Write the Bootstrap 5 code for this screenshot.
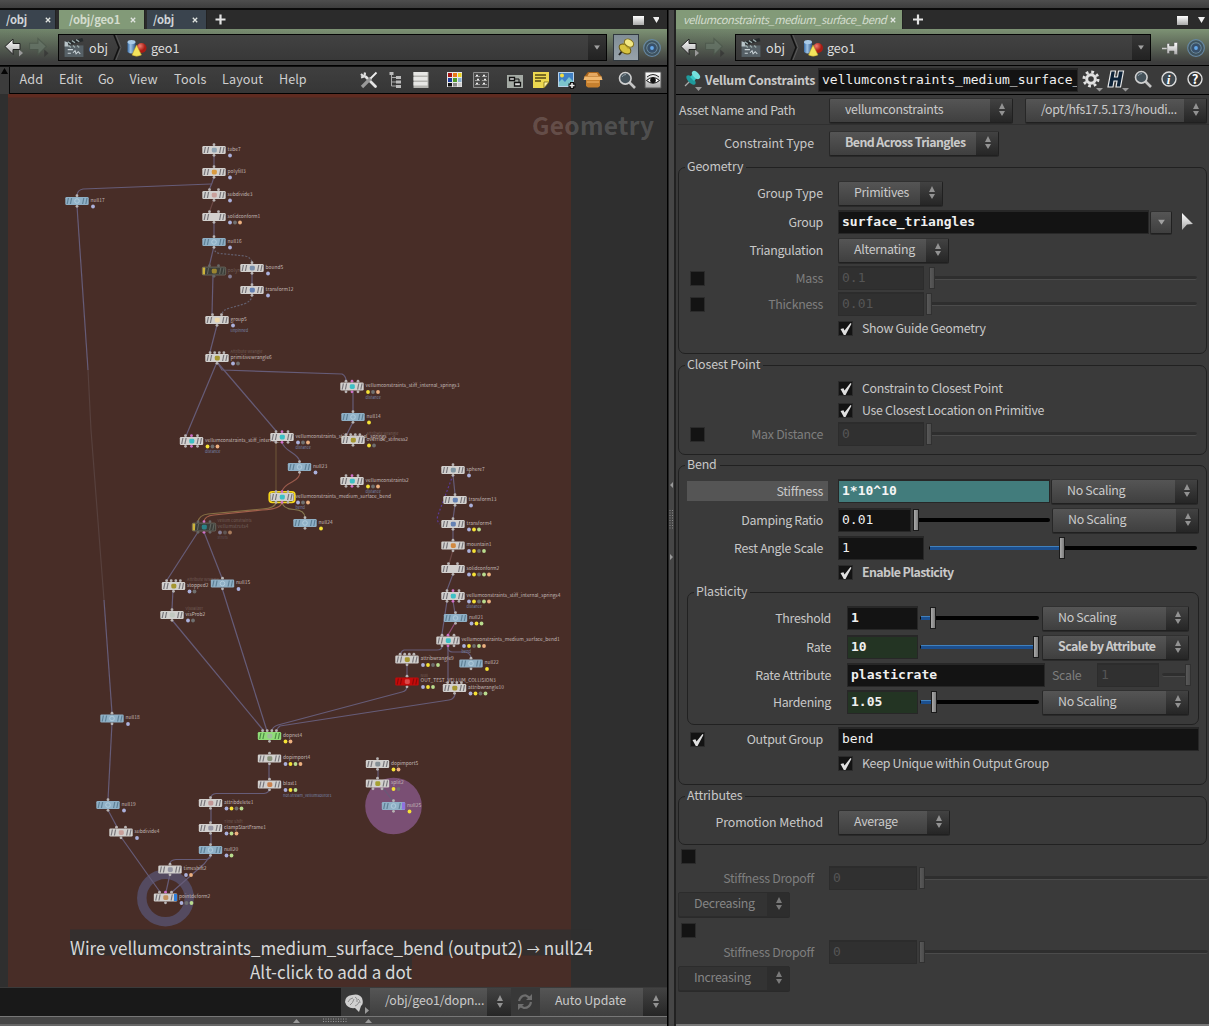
<!DOCTYPE html>
<html lang="en">
<head>
<meta charset="utf-8">
<meta name="viewport" content="width=device-width, initial-scale=1">
<title>Houdini - Vellum Constraints</title>
<link href="https://cdn.jsdelivr.net/npm/bootstrap@5.3.0/dist/css/bootstrap.min.css" rel="stylesheet">
<style>
:root{--ui:"Noto Sans CJK SC","Open Sans",sans-serif;--code:"DejaVu Sans Mono","Liberation Mono",monospace}
body{width:1209px;height:1026px;overflow:hidden;background:#3a3a3a;color:#c8c8c8;font-family:var(--ui);font-size:12.4px;line-height:18px}
svg{display:block;flex:none}
.topstrip{height:10px;background:linear-gradient(#4e4e4e,#3d3d3d);border-bottom:2px solid #0b0b0b;flex:none}
.leftpane{width:668px;border-right:1px solid #000;flex:none}
.vsplit{width:8px;background:#464646;border-left:1px solid #222;border-right:2px solid #222;flex:none}
.rightpane{width:533px;background:#3a3a3a;flex:none}
.tabstrip{height:19px;background:#2b2b2b;flex:none}
.ptab{height:19px;padding:0 4px 0 6px;background:#3a444e;color:#d0d4d8;font-weight:700;font-size:11.3px;letter-spacing:-.2px;border-right:1px solid #222}
.ptab svg{margin-top:7px}
.ptab.live{background:#829a78;color:#d3dccd}
.t1{width:56px}.t2{width:86px;margin-left:3px}.t3{width:60px;margin-left:2px}
.t4{width:227px;font-style:italic;font-weight:400;font-size:11.2px;letter-spacing:-.46px;padding:0 6px 0 7px}
.pathbar{height:37px;background:linear-gradient(#80947700,#3d3d3d 92%),linear-gradient(90deg,#70846a,#7d9274 50%);border-bottom:1px solid #000;flex:none}
.pathfield{height:27px;margin-top:5px;border:1px solid #050505;background:linear-gradient(#424242,#383838);color:#dcdcdc;font-size:12.6px;flex:none}
.pf1{width:549px;margin-left:8px}.pf2{width:416px;margin-left:9px}
.pathdrop{width:18px;height:25px;background:linear-gradient(#363636,#222)}
.pinbtn{width:26px;height:27px;margin:5px 0 0 6px;background:linear-gradient(#808d96,#98a3aa);border:1px solid #30383e;flex:none}
.menurow{height:28px;background:linear-gradient(#3f3f3f,#363636);border-bottom:1px solid #000;border-top:1px solid #111;flex:none}
.menuend{width:10px;height:27px;border-right:1px solid #0a0a0a;background:#3c3c3c}
.netview{height:893px;background:#2f2f2f;flex:none}
.netview text{font-family:var(--ui)}
.cookbar{height:28px;background:#191919;flex:none;letter-spacing:-.1px}
.bottomsplit{height:10px;background:#464646;border-top:1px solid #777;border-bottom:2px solid #666}
.cb1{width:29px;height:28px;background:#383838}
.sel{height:25px;border:1px solid #202020;border-top-color:#303030;border-left-color:#272727;border-radius:2px;background:linear-gradient(#555,#3f3f3f);color:#cacaca;flex:none;box-shadow:0 1px 0 #2a2a2a}
.sel span{padding-left:15px;flex:1;white-space:nowrap;line-height:21px}
.sel em{width:22px;height:23px;background:linear-gradient(#424242,#262626);display:flex;align-items:center;justify-content:center;padding-left:1px}
.sel.off{background:#333;color:#858585;border-color:#2c2c2c}
.sel.off em{background:#2b2b2b;opacity:.75}
.cookbar .sel{border:0;height:28px;border-radius:0}.cookbar .sel span{line-height:25px}.cookbar .sel em{height:28px;width:24px}
.ck1{width:141px}.ck2{width:127px}
.head{height:29px;border-bottom:1px solid #000;flex:none}
.fld{height:24px;background:#131313;border:1px solid #272727;border-top-width:2px;color:#f0f0f0;font-family:var(--code);font-size:13px;letter-spacing:0;line-height:20px;padding-left:3px;overflow:hidden;white-space:nowrap;flex:none}
.fld.off{background:#303030;color:#555;border-color:#2c2c2c}
.fld.expr{background:#427c7c;font-weight:700;color:#f6f6f6}
.fld.key{background:#233423}
.strong{font-weight:700}
.prow{height:24px;display:flex;align-items:center}
.crow{height:18px;display:flex;align-items:center}
.sp1{margin-top:1px}.sp2{margin-top:2px}.sp3{margin-top:3px}.sp4{margin-top:4px}.sp5{margin-top:5px}.sp6{margin-top:6px}.sp10{margin-top:10px}.sp11{margin-top:11px}.sp12{margin-top:12px}
.lab{width:144px;margin-right:15px;display:flex;align-items:center;white-space:nowrap;flex:none}
.lab span{margin-left:auto}
.lab.outer{width:136px}.lab.path{width:151px;margin:0}.lab.path span{margin-left:1px}
.lab.nest{width:143px;margin-right:16px}
.lab.hot span{background:#555;width:141px;margin-right:-5px;padding-right:5px;text-align:right;line-height:20px}
.lab.wide{letter-spacing:-.08px}
.dim{color:#7e7e7e}
.chk{width:15px;height:15px;background:#131313;border:1px solid #2b2b2b;flex:none}
.lab .chk{margin-left:11px}
.chk svg{margin:-1px 0 0 -1px;overflow:visible}
.paramset{border:1px solid #212121;border-radius:7px;width:529px;flex:none}
.paramset>h6{width:max-content;height:18px;line-height:17px;margin:-10px 0 0 6px;padding:0 3px 0 2px;background:#3a3a3a;font-size:12.4px;font-weight:400;color:#c8c8c8;letter-spacing:-.15px}
.geo{height:187px}.closest{height:90px}.bendset{height:320px}.attrs{height:49px}
.plastic{height:133px;width:512px;margin-left:8px}
.sl{position:relative;height:24px;flex:none}
.sl::before{content:"";position:absolute;left:0;right:0;top:10px;height:4px;background:#020202;border-radius:2px}
.sl b{position:absolute;left:1px;top:10px;height:4px;background:#1c4f8e;border-top:1px solid #4080bd}
.sl u{position:absolute;top:1px;width:6px;height:22px;background:linear-gradient(90deg,#aaa,#7c7c7c);border:1px solid #1a1a1a}
.sl.off{opacity:.28}.sl.off::before{background:#111;border-bottom:1px solid #777}
.w62{width:62px}.w70{width:71px}.w73{width:73px}.w86{width:86px}.w88{width:88px}
.s104{width:105px}.s110{width:111px}.s112{width:112px}.s147{width:147px}.s170{width:170px}.s184{width:184px}.s181{width:182px;margin-left:12px}
.l268{width:268px;margin-left:5px}.l286{width:286px;margin-left:5px}.l135{width:135px;margin:0 2px 0 4px}.l118{width:119px;margin:0 3px 0 2px}.l28{width:28px;margin-left:3px}
.rule{height:1px;background:#303030}
#params{padding-left:2px;letter-spacing:-.3px}
.ptitle{letter-spacing:-.28px;margin-left:1px}
.headfld{width:260px}
.grpfld{width:311px}.carbtn{width:22px;height:23px;margin-left:1px}
.stfld{width:212px;margin-right:1px}.rafld{width:198px}.scalecap{width:52px;padding-left:7px}.ogfld{width:361px}
.cap{margin-left:9px;line-height:18px;padding-bottom:1px}.lone{margin-left:3px}
.tight{letter-spacing:-.6px}
.bline{height:2px;background:#777;margin-left:-2px;flex:none}
</style>
<script src="https://cdn.jsdelivr.net/npm/bootstrap@5.3.0/dist/js/bootstrap.bundle.min.js"></script>
</head>
<body class="d-flex flex-column">
<svg width="0" height="0" class="position-absolute">
<defs>
<linearGradient id="wh" x2="0" y2="1"><stop stop-color="#fff"/><stop offset="1" stop-color="#aaa"/></linearGradient>
<linearGradient id="cyl"><stop stop-color="#3a6faa"/><stop offset=".4" stop-color="#9fc3e4"/><stop offset="1" stop-color="#2e5788"/></linearGradient>
<radialGradient id="ball" cx=".35" cy=".3"><stop stop-color="#f08070"/><stop offset="1" stop-color="#a81c14"/></radialGradient>
<symbol id="back" viewBox="0 0 20 20"><path d="M1 9 9 1.500V6H16V12H9V17Z" fill="url(#wh)" stroke="#222" stroke-width="1"/><path d="M15 12 19 15.500 15 19Z" fill="#999"/></symbol>
<symbol id="fwd" viewBox="0 0 20 20"><path d="M17 9 9 1.500V6H1V12H9V17Z" fill="#68776a" stroke="#4b574b"/><path d="M15 12 19 15.500 15 19Z" fill="#333"/></symbol>
<symbol id="clap" viewBox="0 0 20 20"><path d="M1 8H19V19H1Z" fill="#566066"/><path d="M1 5 18 1 19 4 2 8Z" fill="#262a2c"/><path d="m4 4.500 3 2M8 3.500l3 2M12 2.500l3 2M5 8l2 2M9 8l2 2M13 8l2 2" stroke="#9aa" stroke-width="1.300"/><path d="M1 4 4 5 5 9 1 9Z" fill="#b8c4c8"/><path d="M4 12h5M4 15.500h3M9 15l2-2 1 3 2-2 2 2" stroke="#cdd6da" fill="none"/></symbol>
<symbol id="shapes" viewBox="0 0 20 18"><path d="M1 3V13Q5 16 9 13V3Z" fill="url(#cyl)"/><ellipse cx="5" cy="3" rx="4" ry="2" fill="#a9cbe8"/><circle cx="15" cy="9" r="5" fill="url(#ball)"/><path d="M10 6 15 16Q10 18.500 5.500 16Z" fill="#f4e45c" stroke="#b99a28" stroke-width=".5"/></symbol>
<symbol id="target" viewBox="0 0 18 18"><g fill="none" stroke="#6487a5" stroke-width="1.200"><circle cx="9" cy="9" r="8.300"/><circle cx="9" cy="9" r="5.200"/></g><circle cx="9" cy="9" r="6.700" fill="none" stroke="#3b5262" stroke-width="1.500"/><circle cx="9" cy="9" r="4.500" fill="#38506a"/><circle cx="9" cy="9" r="1.900" fill="#64a8ea"/></symbol>
<symbol id="mag" viewBox="0 0 18 18"><path d="m11 11 6 6" stroke="#c4c4c4" stroke-width="2.600"/><circle cx="7.300" cy="7.300" r="5.800" fill="#45525a" stroke="#d0d0d0" stroke-width="1.600"/><path d="M4 6Q5 3.500 8 3.500" stroke="#8b9aa3" fill="none"/></symbol>
<symbol id="ud" viewBox="0 0 8 14"><path d="M4 0 7 6H1ZM4 13 1 8H7Z" fill="#929292"/></symbol>
<symbol id="tri" viewBox="0 0 8 6"><path d="M0 0H8L4 6Z" fill="#a0a0a0"/></symbol>
<symbol id="plus" viewBox="0 0 11 11"><path d="M5.500 .5V10.500M.5 5.500H10.500" stroke="#e4e4e4" stroke-width="2.200"/></symbol>
<symbol id="cross" viewBox="0 0 6 6"><path d="M.8 .8 5.200 5.200M5.200 .8 .8 5.200" stroke="#e0e4e0" stroke-width="1.300"/></symbol>
<symbol id="tick" viewBox="0 0 15 15"><path d="M2.500 8 5.500 7.200 6.500 9.500 12.500 2 13.500 2.800 7.500 14H5.800Z" fill="#e0e0e0"/></symbol>
</defs></svg>

<div class="topstrip"></div>
<main class="d-flex flex-grow-1">
<section class="leftpane d-flex flex-column">
 <div class="tabstrip d-flex align-items-center">
  <div class="ptab t1 d-flex justify-content-between"><span>/obj</span><svg width="6" height="6"><use href="#cross"/></svg></div>
  <div class="ptab t2 live d-flex justify-content-between"><span class="ps-1">/obj/geo1</span><svg class="me-1" width="6" height="6"><use href="#cross"/></svg></div>
  <div class="ptab t3 d-flex justify-content-between"><span>/obj</span><svg class="me-1" width="6" height="6"><use href="#cross"/></svg></div>
  <svg class="ms-2" width="11" height="11"><use href="#plus"/></svg>
  <svg class="ms-auto me-2" width="36" height="12"><rect x="10" y="2" width="11" height="9" fill="url(#wh)"/><path d="M31 3h7l-3.500 6z" fill="#eee" transform="translate(-1)"/></svg>
 </div>
 <div class="pathbar d-flex">
  <svg class="mt-2 ms-1" width="20" height="21"><use href="#back"/></svg>
  <svg class="mt-2 ms-1" width="22" height="21" opacity=".7"><use href="#fwd"/></svg>
  <div class="pathfield pf1 d-flex align-items-center">
   <svg class="ms-1" width="22" height="21"><use href="#clap"/></svg><span class="ms-1">obj</span>
   <svg class="ms-1" width="10" height="25"><path d="M2 0 7 12.500 2 25" fill="none" stroke="#111" stroke-width="1.500"/><path d="M4 0 9 12.500 4 25" fill="none" stroke="#5a5a5a"/></svg>
   <svg class="ms-1" width="21" height="18"><use href="#shapes"/></svg><span class="ms-1">geo1</span>
   <div class="pathdrop ms-auto d-flex align-items-center justify-content-center"><svg width="6" height="5" viewBox="0 0 8 6"><use href="#tri"/></svg></div>
  </div>
  <div class="pinbtn"><svg width="24" height="24"><path d="m9 15-4 5" stroke="#222" stroke-width="2"/><ellipse cx="11" cy="14" rx="6.500" ry="4.200" transform="rotate(35 11 14)" fill="#d8c440" stroke="#6b5b14"/><path d="M9 8 14 14 18 11 14 6Z" fill="#b79f28"/><ellipse cx="15" cy="8" rx="5" ry="3.600" transform="rotate(35 15 8)" fill="#f3e884" stroke="#7d6d1c"/></svg></div>
  <svg class="sp10 ms-1" width="18" height="18"><use href="#target"/></svg>
 </div>
 <div class="menurow d-flex">
  <div class="menuend"><svg width="9" height="8"><path d="M1 7 4.500 1 8 7z" fill="#050505"/></svg></div>
  <svg width="657" height="26" viewBox="10 67 657 26">
   <g fill="#cfcfcf" font-family="Noto Sans CJK SC,sans-serif" font-size="12.6">
    <text x="19.500" y="84" textLength="23.500">Add</text><text x="59" y="84" textLength="23.500">Edit</text><text x="98" y="84" textLength="16">Go</text><text x="129.500" y="84" textLength="28">View</text><text x="174" y="84" textLength="32.500">Tools</text><text x="222" y="84" textLength="41">Layout</text><text x="279" y="84" textLength="27.500">Help</text>
   </g>
   <path d="m366 77 9.500 9.500" stroke="#e4e4e4" stroke-width="2.800" stroke-linecap="round"/><path d="m361 74 3 3M365 72.500l-.5 4-3.500 1" stroke="#ddd" stroke-width="2.200" fill="none"/><path d="m362 87 9-9" stroke="#999" stroke-width="3.200"/><path d="m370.500 78.500 6-6" stroke="#eee" stroke-width="1.800"/>
   <path d="M391.500 73v13h5M391.500 77.500h5M391.500 82h5" stroke="#aaa" fill="none"/><path d="M389.500 72h4v3h-4zM396 76h5v3h-5zm0 4.500h5v3h-5zm0 4.500h5v3h-5z" fill="#bbb"/>
   <path d="M413.500 72h15v16h-15z" fill="#b4b4b0"/><path d="M413.500 72h14v3.500h-14zM413.500 77h14v3.500h-14zm0 5h14v3.500h-14z" fill="#e6e6e4"/>
   <path d="M447 72h15v15h-15z" fill="#e8e8e8"/><path d="M448 73h4v4h-4z" fill="#a61616"/><path d="M453 73h4v4h-4z" fill="#e87818"/><path d="M458 73h3.500v4H458z" fill="#ecd31e"/><path d="M448 78h4v4h-4z" fill="#1e3c9a"/><path d="M453 78h4v4h-4z" fill="#4e9a28"/><path d="M458 78h3.500v4H458z" fill="#8ab0d0"/><path d="M448 83h4v3.500h-4z" fill="#111"/><path d="M453 83h4v3.500h-4z" fill="#888"/><path d="M458 83h3.500v3.500H458z" fill="#ccc"/>
   <path d="M473.500 72.500h15v15h-15z" fill="#484848" stroke="#8e8e8e"/><path d="M475 76.500h5M482 76.500h5M475 80.500h5M482 80.500h5M475 84.500h5M482 84.500h5" stroke="#9a9a9a" stroke-width="1.200"/><path d="M476 75.500h2M483 75.500h2M477 79.500h2M484 79.500h2M476 83.500h2M483 83.500h2" stroke="#eee" stroke-width="1.600"/>
   <path d="M507 72h16v16h-16z" fill="#a4aaa4"/><path d="M507 72h16v3h-16z" fill="#3c3c3c"/><path d="M509.500 77.500h5v3h-5zM514.500 82.500h6v3.500h-6z" fill="#ddd" stroke="#111" stroke-width="1.300"/><path d="M515 79h4v3" fill="none" stroke="#111"/>
   <path d="M533 72h16v10l-5 6h-11z" fill="#ecd850"/><path d="M549 82h-5v6z" fill="#fff3a0" stroke="#6c5c10" stroke-width=".7"/><path d="M535 75h11M535 78h11M535 81h6" stroke="#544a14" stroke-width="1.300"/>
   <path d="M558 72h16v15h-16z" fill="#4080c4"/><path d="M558 87v-4l4-4 3 3 4-5 5 5v5z" fill="#7cc4cc"/><circle cx="562" cy="75.500" r="2" fill="#f2dc40"/><path d="M558.500 72.500h15v14h-15z" fill="none" stroke="#b8d0e8"/><path d="M572 82v7M568.500 85.500h7" stroke="#111" stroke-width="4"/><path d="M572 83v5M569.500 85.500h5" stroke="#eee" stroke-width="1.500"/>
   <path d="m588 72h10l4 5h-18z" fill="#a8641c"/><path d="M589 73h8l1.500 3h-11z" fill="#e4a862"/><path d="M586 80h14v6l-2 1.500h-10l-2-1.500z" fill="#c6802e"/><path d="M587 81h12v2h-12z" fill="#de9c4c"/><path d="M584.500 76.500h17l1 3.500h-19z" fill="#f0b870"/>
   <svg x="618" y="71" width="18" height="18"><use href="#mag"/></svg>
   <path d="M645 72h16v16h-16z" fill="url(#wh)" stroke="#555"/><path d="M646.500 80.500Q653 74.500 659.500 80.500 653 86 646.500 80.500Z" fill="#fff" stroke="#111"/><circle cx="653" cy="80.300" r="2.800" fill="#111"/><path d="M647 77Q653 72 659 77" fill="none" stroke="#222"/>
  </svg>
 </div>
 <div class="netview"><svg id="net" width="667" height="893" viewBox="0 94 667 893">
  <rect x="8" y="94" width="563" height="893" fill="#482d27"/><rect x="8" y="94" width="563" height="3.500" fill="#5f2b20"/>
  <text x="532" y="134.500" textLength="122" font-size="24.500" font-weight="700" fill="#fff" fill-opacity=".17">Geometry</text>
  <circle cx="393.500" cy="806" r="28.300" fill="#7a4f74"/><circle cx="165.500" cy="898" r="23.700" fill="none" stroke="#544a60" stroke-width="9.500"/>
  <g id="wires" fill="none" stroke="#665c78" stroke-width="1.200"></g>
  <g id="nodes"></g>
  <rect x="70" y="929.500" width="523" height="26" fill="#302f2f" fill-opacity=".82"/><rect x="250" y="955.500" width="162" height="24" fill="#302f2f" fill-opacity=".82"/>
  <g fill="#d8d8d8" font-size="18"><text x="70" y="955" textLength="523" lengthAdjust="spacingAndGlyphs">Wire vellumconstraints_medium_surface_bend (output2) <tspan font-size="14" dy="-1">→</tspan><tspan dy="1"> null24</tspan></text><text x="250" y="979" textLength="162" lengthAdjust="spacingAndGlyphs">Alt-click to add a dot</text></g>
 </svg></div>
 <div class="cookbar d-flex justify-content-end sp1">
  <div class="cb1"><svg width="29" height="28"><path d="M4 14Q4 8 11 7 18 5 21 10 23 16 20 18L18 24 14 20Q6 21 4 14Z" fill="#cfcfcf"/><path d="M7 14q2-4 5-4M9 17q3-2 4-6M14 9q3 1 2 5M14 18q3-1 4-4M17 11q2 1 2 4" stroke="#8c8c8c" fill="none"/><path d="m24 19 4 3.500-4 3.500z" fill="#999"/></svg></div>
  <div class="sel ck1 d-flex"><span>/obj/geo1/dopn...</span><em><svg width="8" height="14"><use href="#ud"/></svg></em></div>
  <div class="cb1"><svg width="29" height="28" fill="none" stroke="#6e6e6e" stroke-width="2.200"><path d="M8 13Q10 7 15 7.500L19 10M20 14Q19 20 13 20L9 18"/><path d="M21 6v6h-6zM7 22v-6h6z" fill="#6e6e6e" stroke="none"/></svg></div>
  <div class="sel ck2 d-flex"><span>Auto Update</span><em><svg width="8" height="14"><use href="#ud"/></svg></em></div>
 </div>
 <div class="bottomsplit"><svg width="667" height="7"><path d="m293 6 3.500-4 3.500 4zM365 6l3.500-4L372 6z" fill="#999"/><path d="M323 2h24M323 4.500h24" stroke="#999" stroke-dasharray="1 1.500"/></svg></div>
</section>

<div class="vsplit"><svg width="5" height="1016"><path d="M4 472 1 475l3 3zM1 544l3 3-3 3z" fill="#999"/><path d="M1 500v20M3.500 500v20" stroke="#888" stroke-dasharray="1 1.500"/></svg></div>

<section class="rightpane d-flex flex-column">
 <div class="tabstrip d-flex align-items-center">
  <div class="ptab t4 live d-flex justify-content-between"><span>vellumconstraints_medium_surface_bend</span><svg width="6" height="6"><use href="#cross"/></svg></div>
  <svg class="ms-2" width="14" height="11"><use href="#plus"/></svg>
  <svg class="ms-auto" width="32" height="12"><rect x="0" y="2" width="11" height="9" fill="url(#wh)"/><path d="M21 3h7l-3.500 6z" fill="#eee"/></svg>
 </div>
 <div class="pathbar d-flex">
  <svg class="mt-2 ms-1" width="20" height="21"><use href="#back"/></svg>
  <svg class="mt-2 ms-1" width="22" height="21" opacity=".7"><use href="#fwd"/></svg>
  <div class="pathfield pf2 d-flex align-items-center">
   <svg class="ms-1" width="22" height="21"><use href="#clap"/></svg><span class="ms-1">obj</span>
   <svg class="ms-1" width="10" height="25"><path d="M2 0 7 12.500 2 25" fill="none" stroke="#111" stroke-width="1.500"/><path d="M4 0 9 12.500 4 25" fill="none" stroke="#5a5a5a"/></svg>
   <svg class="ms-1" width="20" height="18"><use href="#shapes"/></svg><span class="ms-1">geo1</span>
   <div class="pathdrop ms-auto d-flex align-items-center justify-content-center"><svg width="6" height="5" viewBox="0 0 8 6"><use href="#tri"/></svg></div>
  </div>
  <svg class="sp10 ms-auto" width="17" height="18"><path d="M0 9.500h6" stroke="#ccc" stroke-width="1.500"/><path d="M5 4.500h2.500V7H12V3.500h3.500v12H12V12H7.500v2.500H5z" fill="url(#wh)" stroke="#555" stroke-width=".5"/></svg>
  <svg class="ms-2 me-1 sp10" width="18" height="18"><use href="#target"/></svg>
 </div>
 <div class="head d-flex align-items-center">
  <svg class="ms-2" width="20" height="24"><path d="m6 13-5 5" stroke="#aaa" stroke-width="1.300"/><ellipse cx="7" cy="12" rx="6" ry="2.900" transform="rotate(45 7 12)" fill="#1f9a9c"/><path d="M6 9 10 13 14 9 10 5Z" fill="#38c6c4"/><ellipse cx="12" cy="7" rx="5" ry="2.800" transform="rotate(45 12 7)" fill="#74e0dc"/><path d="M11 19h7l-3.500 4z" fill="#999"/></svg>
  <span class="ptitle strong text-nowrap">Vellum Constraints</span>
  <div class="fld ms-auto headfld">vellumconstraints_medium_surface_</div>
  <svg width="131" height="28" viewBox="1078 67 131 28">
   <circle cx="1091" cy="80" r="4.300" fill="none" stroke="#e0e0e0" stroke-width="3"/><circle cx="1091" cy="80" r="7" fill="none" stroke="#e0e0e0" stroke-width="3" stroke-dasharray="2.700 2.800"/>
   <path d="M1096 89h7l-3.500 3.500zM1122 89h7l-3.500 3.500z" fill="#999"/>
   <path d="M1111 72h4.500l-1 6h3l1-6h5l-3 16h-4.500l1-6h-3l-1 6h-5z" fill="#0c2238" stroke="#e8e8e8" stroke-width="1.200"/>
   <svg x="1134" y="71" width="18" height="18"><use href="#mag"/></svg>
   <circle cx="1169" cy="80" r="7" fill="#40494f" stroke="#ddd" stroke-width="1.400"/><text x="1166.800" y="84.500" font-family="Liberation Serif,serif" font-style="italic" font-weight="700" font-size="13" fill="#fff">i</text>
   <circle cx="1195" cy="80" r="7" fill="#333" stroke="#ddd" stroke-width="1.400"/><text x="1191.800" y="84.800" font-family="Noto Sans CJK SC,sans-serif" font-weight="700" font-size="13" fill="#fff">?</text>
  </svg>
 </div>
 <div id="params" class="d-flex flex-column flex-grow-1">
  <div class="prow sp3"><div class="lab path"><span>Asset Name and Path</span></div><div class="sel s184 d-flex"><span>vellumconstraints</span><em><svg width="8" height="14"><use href="#ud"/></svg></em></div><div class="sel d-flex s181"><span>/opt/hfs17.5.173/houdi...</span><em><svg width="8" height="14"><use href="#ud"/></svg></em></div></div>
  <div class="rule sp2"></div>
  <div class="prow sp6"><div class="lab outer wide"><span>Constraint Type</span></div><div class="sel s170 d-flex strong tight"><span>Bend Across Triangles</span><em><svg width="8" height="14"><use href="#ud"/></svg></em></div></div>

  <div class="paramset geo sp12"><h6>Geometry</h6>
   <div class="prow sp5"><div class="lab wide"><span>Group Type</span></div><div class="sel s104 d-flex"><span>Primitives</span><em><svg width="8" height="14"><use href="#ud"/></svg></em></div></div>
   <div class="prow sp5"><div class="lab"><span>Group</span></div><div class="fld strong grpfld">surface_triangles</div><div class="sel carbtn d-flex align-items-center justify-content-center"><svg width="7" height="6" viewBox="0 0 8 6"><use href="#tri"/></svg></div><svg class="ms-2" width="14" height="20"><path d="M2 1 13 12 7 12.500 2 18Z" fill="url(#wh)"/></svg></div>
   <div class="prow sp4"><div class="lab"><span>Triangulation</span></div><div class="sel s110 d-flex"><span>Alternating</span><em><svg width="8" height="14"><use href="#ud"/></svg></em></div></div>
   <div class="prow sp4"><div class="lab dim"><div class="chk"></div><span>Mass</span></div><div class="fld off w86">0.1</div><div class="sl off l268"><u style="left:0"></u></div></div>
   <div class="prow sp2"><div class="lab dim"><div class="chk"></div><span>Thickness</span></div><div class="fld off w86">0.01</div><div class="sl off l268"><u style="left:-3px"></u></div></div>
   <div class="crow sp3"><div class="lab"></div><div class="chk"><svg width="15" height="15"><use href="#tick"/></svg></div><span class="cap">Show Guide Geometry</span></div>
  </div>

  <div class="paramset closest sp11"><h6>Closest Point</h6>
   <div class="crow sp5"><div class="lab"></div><div class="chk"><svg width="15" height="15"><use href="#tick"/></svg></div><span class="cap">Constrain to Closest Point</span></div>
   <div class="crow sp4"><div class="lab"></div><div class="chk"><svg width="15" height="15"><use href="#tick"/></svg></div><span class="cap">Use Closest Location on Primitive</span></div>
   <div class="prow sp3"><div class="lab dim"><div class="chk"></div><span>Max Distance</span></div><div class="fld off w86">0</div><div class="sl off l268"><u style="left:-3px"></u></div></div>
  </div>

  <div class="paramset bendset sp10"><h6>Bend</h6>
   <div class="prow sp5"><div class="lab hot"><span>Stiffness</span></div><div class="fld expr stfld">1*10^10</div><div class="sel s147 d-flex"><span>No Scaling</span><em><svg width="8" height="14"><use href="#ud"/></svg></em></div></div>
   <div class="prow sp5"><div class="lab"><span>Damping Ratio</span></div><div class="fld w73">0.01</div><div class="sl l135"><u style="left:-2px"></u></div><div class="sel s147 d-flex"><span>No Scaling</span><em><svg width="8" height="14"><use href="#ud"/></svg></em></div></div>
   <div class="prow sp4"><div class="lab"><span>Rest Angle Scale</span></div><div class="fld w86">1</div><div class="sl l268"><b style="width:130px"></b><u style="left:130px"></u></div></div>
   <div class="crow sp3"><div class="lab"></div><div class="chk"><svg width="15" height="15"><use href="#tick"/></svg></div><span class="cap strong tight">Enable Plasticity</span></div>
   <div class="paramset plastic sp11"><h6>Plasticity</h6>
    <div class="prow sp5"><div class="lab nest"><span>Threshold</span></div><div class="fld strong w70">1</div><div class="sl l118"><b style="width:12px"></b><u style="left:10px"></u></div><div class="sel s147 d-flex"><span>No Scaling</span><em><svg width="8" height="14"><use href="#ud"/></svg></em></div></div>
    <div class="prow sp5"><div class="lab nest"><span>Rate</span></div><div class="fld key strong w70">10</div><div class="sl l118"><b style="width:112px"></b><u style="left:113px"></u></div><div class="sel s147 d-flex strong tight"><span>Scale by Attribute</span><em><svg width="8" height="14"><use href="#ud"/></svg></em></div></div>
    <div class="prow sp4"><div class="lab nest"><span>Rate Attribute</span></div><div class="fld strong rafld">plasticrate</div><span class="dim scalecap">Scale</span><div class="fld off w62">1</div><div class="sl off l28"><u style="left:23px"></u></div></div>
    <div class="prow sp3"><div class="lab nest"><span>Hardening</span></div><div class="fld key strong w70">1.05</div><div class="sl l118"><b style="width:12px"></b><u style="left:11px"></u></div><div class="sel s147 d-flex"><span>No Scaling</span><em><svg width="8" height="14"><use href="#ud"/></svg></em></div></div>
   </div>
   <div class="prow sp2"><div class="lab"><div class="chk"><svg width="15" height="15"><use href="#tick"/></svg></div><span>Output Group</span></div><div class="fld ogfld">bend</div></div>
   <div class="crow sp3"><div class="lab"></div><div class="chk"><svg width="15" height="15"><use href="#tick"/></svg></div><span class="cap">Keep Unique within Output Group</span></div>
  </div>

  <div class="paramset attrs sp11"><h6>Attributes</h6>
   <div class="prow sp5"><div class="lab wide"><span>Promotion Method</span></div><div class="sel s112 d-flex"><span>Average</span><em><svg width="8" height="14"><use href="#ud"/></svg></em></div></div>
  </div>
  <div class="crow sp2"><div class="chk lone"></div></div>
  <div class="prow sp1"><div class="lab outer dim"><span>Stiffness Dropoff</span></div><div class="fld off w88">0</div><div class="sl off l286"><u style="left:-3px"></u></div></div>
  <div class="prow sp2"><div class="sel off s112 d-flex ms-0"><span>Decreasing</span><em><svg width="8" height="14"><use href="#ud"/></svg></em></div></div>
  <div class="crow sp5"><div class="chk lone"></div></div>
  <div class="prow sp1"><div class="lab outer dim"><span>Stiffness Dropoff</span></div><div class="fld off w88">0</div><div class="sl off l286"><u style="left:-3px"></u></div></div>
  <div class="prow sp2"><div class="sel off s112 d-flex"><span>Increasing</span><em><svg width="8" height="14"><use href="#ud"/></svg></em></div></div>
  <div class="mt-auto bline"></div>
 </div>
</section>
</main>
<script>
// Network graph: wires first, then one group per operator tile.
const wires=[
'M214 155V168','M214 177 212 183 209 190','M211 184 83 189Q77 190 77 196','M77 206 88 370','M104 600 112 713','M214 221V237','M214 246 209 267','M252 272V285','M213 275 212 314','M217 325 210 352',
'M217 362 186 436','M217 362 277 432','M217 362 222 370 342 374Q346 376 346 381','M353 391V412','M353 422 347 434','M282 442Q283 447 291 452T300 462',
'M198 532 167 580','M204 532 222 578','M173 590 172 609','M172 620 264 731','M222 588 267 731','M453 475 455 494','M455 505 453 519','M453 529V541','M453 574 447 590','M453 601 455 613',
'M447 601 442 634V646Q442 650 437 650H404Q401 651 401 654','M448 645V649Q449 652 453 652H465Q471 653 471 659','M448 645V683','M407 664V677','M407 686Q407 691 402 692L278 725Q272 727 272 731','M455 693Q455 699 449 700L280 726Q277 728 277 731',
'M269 763V780','M269 789Q269 793 264 793.500H216Q211 794 211 798','M211 808V823','M211 833V845','M211 855Q211 859 206 859.500H176Q170 860 170 864','M211 855 204 864 172 892','M170 874 166 892','M112 723 108 800','M108 810 117 827','M121 837 160 892','M378 768V779','M383 788 393 801'];
const tinted=[['M214 247Q214 253 220 253.500L245 256Q252 258 252 263','#64606f','2 1.500'],['M252 295Q252 301 244 304L230 308Q222 310 222 315','#64606f','2 1.500'],
['M453 475 438 515Q436 521 440 524','#5a3a96','2 2'],['M276 442V491','#695036'],['M300 472Q300 478 292 482T282 491','#9a5a4c'],
['M276 502Q276 508 262 509L208 514Q199 515 198 522','#877044'],['M282 502Q282 509 262 510L214 515Q204 516 204 522','#a4604c'],['M282 502Q283 509 294 509.500 305 510 305 518','#877a50'],
['M455 623 448 635','#92507a'],['M88 370 91 430 104 600','#57403d'],['M214 199 209 213','#6a4744'],['M453 550 449 564','#6a4744']];
const D={b:'#abb1dc',y:'#f5e236',g:'#6f6f6f',G:'#b9dc8e',o:'#edb080'};
// x, y, kind, label, dots, icon colour, inputs, outputs, note below, note above
const N=[
[214,150,'w','tube7','b','#8aa0b0',1],[214,172,'w','polyfill3','b','#d89430',1],[214,195,'w','subdivide3','b','#c89a96',2],[214,217,'w','solidconform1','bgo','#ccc',2],[214,242,'n','null16','b','',1],
[214,271,'d','polyreduce4','b','#a58c30',2],[252,268,'w','bound5','b','#7088a8',1],[252,290,'w','transform12','b','#5878b0',1],[77,201,'n','null17','b','',1],[217,320,'w','group5','b','#f0d8a8',2,1,'unpinned'],[217,358,'w','primitivewrangle6','bg','#a09020',4,1,'','Attribute Wrangle'],
[352,386.5,'w','vellumconstraints_stiff_internal_springs3','ygo','#2cbcc4',3,3,'distance'],[353,417,'n','null14','y','',1],[353,440,'w','override_stifness2','yg','#a09020',4,1,'','Attribute Wrangle'],
[191.5,441,'w','vellumconstraints_stiff_internal_','ygo','#2cbcc4',3,3,'distance'],[282,437,'w','vellumconstraints_stiff_internal_springs','bgo','#2cbcc4',3,3,'distance'],[299.5,467,'n','null23','b','',1],
[282,497,'w','vellumconstraints_medium_surface_bend','bgo','#2cbcc4',3,3,'bend'],[305,523,'n','null24','y','',1],[204,527,'d','vellumstruts4','bgo','#2a8a90',3,3,'struts','Vellum Constraints'],[352,481,'w','vellumconstraints2','ygo','#2cbcc4',3,3,'distance'],
[173.5,586,'w','stopped2','bg','#a09020',4,1,'','Attribute Wrangle'],[222.5,583.5,'n','null15','b','',1],[172,615,'w','visProb2','bg','#c0c8c0',1,1,'','Visualizer'],
[453,470,'w','sphere7','b','#7890a0',1],[455,500,'w','transform13','b','#5878b0',1],[453,524,'w','transform4','byG','#5878b0',1],[453,545.5,'w','mountain1','bygG','#d08030',1],[453,569,'w','solidconform2','bygGo','#ccc',2],[453,596,'w','vellumconstraints_stiff_internal_springs4','bygGo','#2cbcc4',3,3,'distance'],[455.5,618,'n','null21','byG','',1],
[448,640.5,'w','vellumconstraints_medium_surface_bend1','bygGo','#2cbcc4',3,3,'bend'],[407,659.5,'w','attribwrangle9','bygG','#a09020',4],[471,663.5,'n','null22','y','',1],[407,681.5,'r','OUT_TEST_VELLUM_COLLISION3','byG','#e05050',1,1,'','Null'],[454.5,688,'w','attribwrangle10','bygG','#a09020',4],
[112,718.5,'n','null18','b','',1],[108,805,'n','null19','b','',1],[121,832.5,'w','subdivide4','b','#c89a96',2],[269.5,736,'g','dopnet4','yo','#a0b8a0',4],[269.5,758.5,'w','dopimport4','byGo','#808a70',1],[269.5,784.5,'w','blast1','byG','#c87840',1,1,'not:stream_vellumsource1'],
[210.5,803,'w','attribdelete1','bygG','#c09090',1],[210.5,828,'w','clampStartFrame1','bGo','#9090a0',1,1,'','Time Shift'],[210.5,850,'n','null20','bG','',1],[170,869.5,'w','timeshift2','bo','#9090a0',1],[165.5,897.5,'w','pointdeform2','bgG','#c08850',3],[377.5,764,'w','dopimport5','yo','#7c8890',1],[377.5,783.5,'w','split2','yg','#a09a20',1,2],[393.5,806,'n','null25','y','',1]];
const body={w:'#d2d0ce',n:'#8fb0c6',d:'#3b3d38',r:'#c40a0a',g:'#90dc78'},bar={w:'#77757a',n:'#5e8096',d:'#62645e',r:'#8c0808',g:'#4c8c44'};
document.getElementById('wires').innerHTML=wires.map(d=>`<path d="${d}"/>`).join('')+tinted.map(t=>`<path d="${t[0]}" stroke="${t[1]}" ${t[2]?`stroke-dasharray="${t[2]}"`:''}/>`).join('');
const ports=(x,y,n,c)=>{const s=n==4?4.6:n==3?6:9;let o='';for(let i=0;i<n;i++)o+=`<circle cx="${x+(i-(n-1)/2)*s}" cy="${y}" r="1.400" fill="${n==3&&i==1?'#d070c8':c}"/>`;return o};
document.getElementById('nodes').innerHTML=N.map(([x,y,k,l,dots,ic,i=1,o=1,below,above])=>{
 const dim=k=='d',lx=x+13.6,pc=dim?'#666':'#b8b4b4';let s=`<g>`;
 if(l=='vellumconstraints_medium_surface_bend')s+=`<rect x="${x-12.700}" y="${y-5.200}" width="25.500" height="10.500" rx="3" fill="#111" stroke="#f6d61c" stroke-width="1.800"/>`;
 s+=ports(x,y-5.3,i,pc)+ports(x,y+5.3,o,pc)+`<rect x="${x-11.7}" y="${y-3.9}" width="23.400" height="7.900" rx="1.200" fill="${body[k]}" ${dim?'stroke="#6c6a60" stroke-width=".9"':''}/>`;
 for(const b of [-9.200,-6,6.200,9.400])s+=`<path d="M${x+b+.6} ${y-3}l-1.200 6" stroke="${bar[k]}" stroke-width="1.200"/>`;
 if(dim)s+=`<rect x="${x-11.4}" y="${y-3.500}" width="2.400" height="7" fill="#cdb23a"/>`;
 if(ic&&ic!='#ccc')s+=`<rect x="${x-2.200}" y="${y-2.200}" width="5" height="4.600" rx="1.400" fill="${ic}" opacity=".9"/>`;
 if(k=='n')s+=`<circle cx="${x}" cy="${y}" r="2.300" fill="none" stroke="#b6d0e0" stroke-width=".8"/>`;
 if(l=='pointdeform2')s+=`<rect x="${x+8.500}" y="${y-3.500}" width="3" height="7" fill="#2f80dc"/>`;
 if(l=='null25')s+=`<rect x="${x+8.500}" y="${y-3.500}" width="3" height="7" fill="#9070e0"/>`;
 s+=`<text x="${lx}" y="${y+.6}" font-size="4.850" fill="${dim?'#6f5e5a':'#c4bab8'}">${l}</text>`;
 if(above)s+=`<text x="${lx}" y="${y-5}" font-size="3.900" fill="#735d58">${above}</text>`;
 if(below)s+=`<text x="${lx}" y="${y+12}" font-size="3.900" fill="${dim?'#5e5054':'#7684a8'}">${below}</text>`;
 [...dots].forEach((d,j)=>s+=`<circle cx="${x+16+j*5}" cy="${y+5.500}" r="1.900" fill="${D[d]}" ${dim?'opacity=".6"':''}/>`);
 return s+'</g>'}).join('');
</script>
</body>
</html>
